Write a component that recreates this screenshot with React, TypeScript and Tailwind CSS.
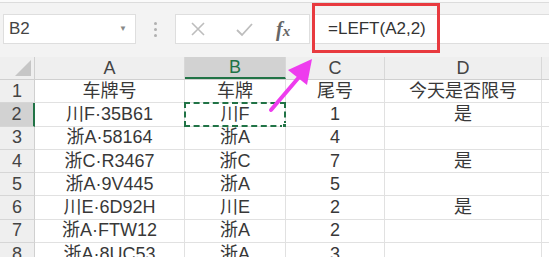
import clsx from 'clsx';

const font = { fontFamily: '"Liberation Sans", "Noto Sans CJK SC", sans-serif' };

const rows: string[][] = [
  ['车牌号', '车牌', '尾号', '今天是否限号'],
  ['川F·35B61', '川F', '1', '是'],
  ['浙A·58164', '浙A', '4', ''],
  ['浙C·R3467', '浙C', '7', '是'],
  ['浙A·9V445', '浙A', '5', ''],
  ['川E·6D92H', '川E', '2', '是'],
  ['浙A·FTW12', '浙A', '2', ''],
  ['浙A·8UC53', '浙A', '3', ''],
];

const cols = ['A', 'B', 'C', 'D'];
const colW = ['w-[150px]', 'w-[101px]', 'w-[99px]', 'w-[157px]'];

function Toolbar() {
  return (
    <div className="h-[57px] bg-[#f3f3f3]">
      <div className="h-[3px] border-b border-[#dcdcdc] bg-[#fafafa]" />
      <div className="flex items-center pt-[11px] pl-[3px] h-[41px]">
        <div className="w-[133px] h-[30px] bg-white border border-[#dedede] flex items-center justify-between pl-[5px] pr-[8px]">
          <span className="text-[17px] text-[#444]">B2</span>
          <span className="text-[8px] text-[#888]">▼</span>
        </div>
        <div className="w-[39px] flex flex-col items-center gap-[3px]">
          <span className="w-[3px] h-[3px] rounded-full bg-[#b0b0b0]" />
          <span className="w-[3px] h-[3px] rounded-full bg-[#b0b0b0]" />
          <span className="w-[3px] h-[3px] rounded-full bg-[#b0b0b0]" />
        </div>
        <div className="w-[135px] h-[30px] bg-white border border-[#dedede] flex items-center">
          <svg width="18" height="18" viewBox="0 0 18 18" className="ml-[13px]">
            <path d="M3 3 L15 15 M15 3 L3 15" stroke="#bdbdbd" strokeWidth="1.6" fill="none" />
          </svg>
          <svg width="20" height="18" viewBox="0 0 20 18" className="ml-[27px]">
            <path d="M3 10 L8 15 L18 4" stroke="#bdbdbd" strokeWidth="1.8" fill="none" />
          </svg>
          <span
            className="ml-[22px] text-[20px] italic font-bold text-[#666] leading-none"
            style={{ fontFamily: '"Liberation Serif", serif' }}
          >
            f<span className="text-[15px]">x</span>
          </span>
        </div>
        <div className="ml-[2px] flex-1 h-[30px] bg-white border-y border-[#dedede] flex items-center pl-[16px]">
          <span className="text-[17px] text-[#333]">=LEFT(A2,2)</span>
        </div>
      </div>
    </div>
  );
}

function HeaderRow() {
  return (
    <div className="flex h-[23px] bg-[#efefef] border-b border-[#d0d0d0]">
      <div className="w-[35px] border-r border-[#d0d0d0] flex items-end justify-end pr-[3px] pb-[3px]">
        <svg width="16" height="16" viewBox="0 0 16 16">
          <path d="M16 0 L16 16 L0 16 Z" fill="#c6c6c6" />
        </svg>
      </div>
      {cols.map((c, i) => (
        <div
          key={c}
          className={clsx(
            colW[i],
            'flex items-center justify-center text-[18px] border-r border-[#d8d8d8]',
            c === 'B' ? 'bg-[#d2d2d2] text-[#217346] border-b-2 border-b-[#217346]' : 'text-[#444]'
          )}
        >
          {c}
        </div>
      ))}
      <div className="flex-1" />
    </div>
  );
}

export default function App() {
  return (
    <div className="relative w-[549px] h-[257px] overflow-hidden bg-white" style={font}>
      <Toolbar />
      <HeaderRow />
      {rows.map((r, ri) => (
        <div key={ri} className="flex h-[23.3px]">
          <div
            className={clsx(
              'w-[35px] flex items-center justify-center text-[18px] border-b border-[#d6d6d6] text-[#444]',
              ri === 1 ? 'bg-[#d2d2d2] border-r-2 border-r-[#217346]' : 'bg-[#efefef] border-r border-r-[#d0d0d0]'
            )}
          >
            {ri + 1}
          </div>
          {r.map((v, ci) => (
            <div
              key={ci}
              className={clsx(
                colW[ci],
                'relative flex items-center justify-center text-[18px] text-[#383838] border-r border-b border-[#e1e1e1] whitespace-nowrap'
              )}
            >
              {v}
              {ri === 1 && ci === 1 && (
                <div className="absolute -left-[1px] -top-[1px] w-[102px] h-[25px] border-2 border-dashed border-[#217346]">
                  <div className="absolute -right-[3px] -bottom-[3px] w-[5px] h-[5px] bg-[#217346] border border-white" />
                </div>
              )}
            </div>
          ))}
          <div className="flex-1 border-b border-[#e1e1e1]" />
        </div>
      ))}

      {/* red highlight round the formula */}
      <div className="absolute left-[312px] top-[3px] w-[128px] h-[50px] border-[3px] border-[#e83a3f]" />

      {/* magenta arrow */}
      <svg className="absolute left-0 top-0" width="549" height="257" viewBox="0 0 549 257">
        <line x1="271" y1="110" x2="300" y2="76" stroke="#ee3cee" strokeWidth="4" strokeLinecap="round" />
        <path d="M312 59 L307 85 L288 70 Z" fill="#ee3cee" />
      </svg>
    </div>
  );
}
